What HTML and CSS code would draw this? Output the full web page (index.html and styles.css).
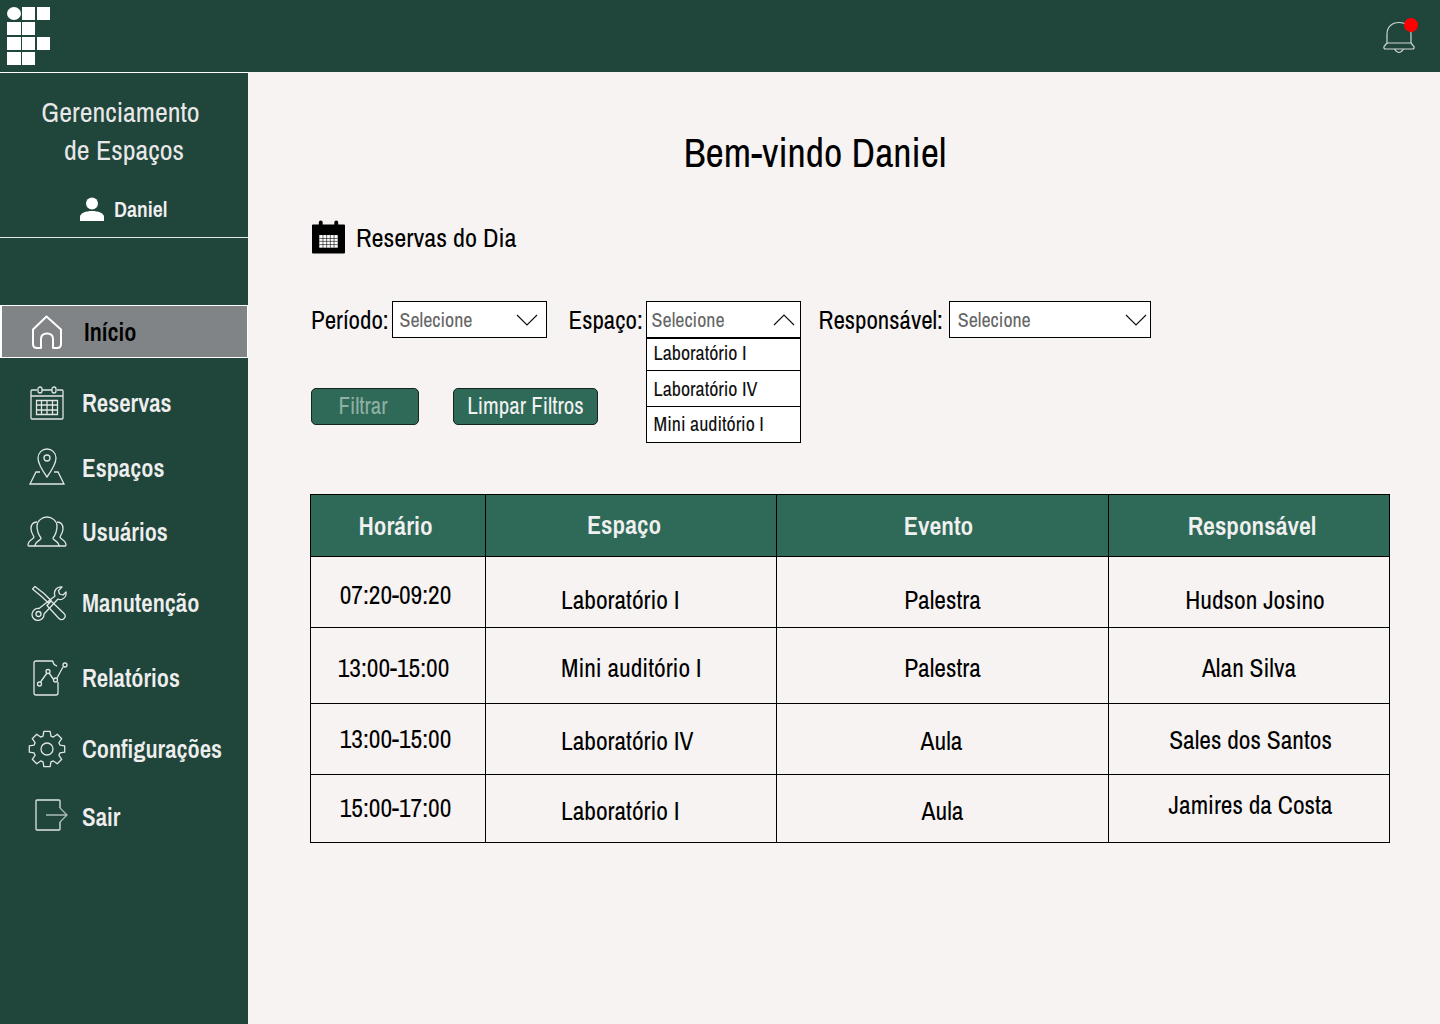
FILE: index.html
```html
<!DOCTYPE html>
<html lang="pt-BR">
<head>
  <meta charset="UTF-8">
  <title>Gerenciamento de Espaços</title>
  <link rel="stylesheet" href="styles.css">
</head>
<body>
  <header class="topbar">
    <!-- Logo -->
    <svg class="logo" width="44" height="59" viewBox="0 0 44 59" fill="#fff">
      <ellipse cx="7" cy="6.500" rx="7" ry="6.500"/>
      <rect x="15" width="13" height="13"/><rect x="30" width="13" height="13"/>
      <rect y="15" width="14" height="13"/><rect x="15" y="15" width="13" height="13"/>
      <rect y="30" width="14" height="13"/><rect x="15" y="30" width="13" height="13"/><rect x="30" y="30" width="13" height="13"/>
      <rect y="45" width="14" height="13"/><rect x="15" y="45" width="13" height="13"/>
    </svg>
    <div class="bell">
      <svg width="34" height="34" viewBox="0 0 34 34" fill="none" stroke="#cfd8d4" stroke-width="1.200">
        <path d="M5 23V14C5 7 10 2.500 17 2.500S29 7 29 14V23"/>
        <path d="M5 23L2 26.500Q1.500 29 3.500 29H30.500Q32.500 29 32 26.500L29 23H5"/>
        <path d="M12.500 29Q17 36 21.500 29"/>
      </svg>
      <span class="bell-dot"></span>
    </div>
  </header>

  <div class="layout">
    <aside class="sidebar">
      <div class="side-head">
        <h2 class="side-title">Gerenciamento<br><span class="side-title-2">de Espaços</span></h2>
        <div class="side-user">
          <svg width="24" height="24" viewBox="0 0 24 24" fill="#fff">
            <circle cx="12" cy="6.500" r="6"/>
            <path d="M0 24V20C0 16 6 14 12 14S24 16 24 20V24Z"/>
          </svg>
          <span>Daniel</span>
        </div>
      </div>

      <nav class="nav">
        <a class="nav-item active">
          <svg width="32" height="34" viewBox="0 0 32 34" fill="none" stroke="#fff" stroke-width="2" stroke-linejoin="round">
            <path d="M2 14.500L15.500 1.500L30 14.500V29Q30 33 26 33H22V24Q22 18.500 16 18.500T10 24V33H6Q2 33 2 29Z"/>
          </svg>
          <span>Início</span>
        </a>
        <a class="nav-item item-reservas">
          <svg width="34" height="34" viewBox="0 0 34 34" fill="none" stroke="#dfe5e2" stroke-width="1.300">
            <path d="M7 4H2Q1 4 1 5V32Q1 33 2 33H32Q33 33 33 32V5Q33 4 32 4H27M12 4H22M1 10H33"/>
            <rect x="8" y="1" width="4" height="6" rx="2"/><rect x="22" y="1" width="4" height="6" rx="2"/>
            <path d="M6.500 14.500H27.500V28.500H6.500ZM6.500 19H27.500M6.500 24H27.500M11.500 14.500V28.500M17 14.500V28.500M22.500 14.500V28.500"/>
          </svg>
          <span>Reservas</span>
        </a>
        <a class="nav-item item-espacos">
          <svg width="38" height="38" viewBox="0 0 38 38" fill="none" stroke="#dfe5e2" stroke-width="1.300">
            <path d="M19 30C14 23 10 17 10 11A9 9 0 0 1 28 11C28 17 24 23 19 30Z"/>
            <circle cx="19" cy="11" r="3"/>
            <path d="M12 25H8L2 37H36L30 25H26"/>
          </svg>
          <span>Espaços</span>
        </a>
        <a class="nav-item item-usuarios">
          <svg width="40" height="32" viewBox="0 0 40 32" fill="none" stroke="#dfe5e2" stroke-width="1.300">
            <path d="M14 22C11 18 10 15 10 10C10 5 15 1 20 1S30 5 30 10C30 15 29 18 26 22C25 24 32 25 32 30H8C8 25 15 24 14 22Z"/>
            <path d="M10 6C6 6 4 9 4 13C4 16 6 19 7 21C7 23 1 24 1 29Q1 30 2 30H8"/>
            <path d="M30 6C34 6 36 9 36 13C36 16 34 19 33 21C33 23 39 24 39 29Q39 30 38 30H32"/>
          </svg>
          <span>Usuários</span>
        </a>
        <a class="nav-item item-manutencao">
          <svg width="36" height="36" viewBox="0 0 36 36" fill="none" stroke="#dfe5e2" stroke-width="1.300" stroke-linejoin="round">
            <path d="M1.500 4L4 1.500L13 8.500L20 15.500L17.500 18L10 11Z"/>
            <path d="M20 16L33 28.500Q35.500 31 33 33.500T27.500 33L16 20.500Z"/>
            <path d="M24 11C22 6 26 1 31 2L27.500 5.500L28.500 9L32 10L35 7C36 12 31 16 27 14L13 29A6 6 0 1 1 8 23.500Z"/>
            <circle cx="7.500" cy="29" r="2.500"/>
          </svg>
          <span>Manutenção</span>
        </a>
        <a class="nav-item item-relatorios">
          <svg width="36" height="36" viewBox="0 0 36 36" fill="none" stroke="#dfe5e2" stroke-width="1.300">
            <path d="M20 1H3Q1 1 1 3V33Q1 35 3 35H23Q25 35 25 33V22"/>
            <path d="M20 1Q20 5 24 6"/>
            <path d="M7.500 22L14 13M16 13L21 20M24 18L30 7"/>
            <circle cx="6.500" cy="24" r="2"/><circle cx="15" cy="11.500" r="2"/><circle cx="22.500" cy="20" r="2"/><circle cx="32" cy="5" r="2"/>
          </svg>
          <span>Relatórios</span>
        </a>
        <a class="nav-item item-config">
          <svg width="38" height="38" viewBox="0 0 38 38" fill="none" stroke="#dfe5e2" stroke-width="1.300" stroke-linejoin="round">
            <g transform="translate(19 19)">
              <polygon points="-3.950,-12.900 -3.130,-17.700 3.130,-17.700 3.950,-12.900 6.330,-11.910 10.300,-14.730 14.730,-10.300 11.910,-6.330 12.900,-3.950 17.700,-3.130 17.700,3.130 12.900,3.950 11.910,6.330 14.730,10.300 10.300,14.730 6.330,11.910 3.950,12.900 3.130,17.700 -3.130,17.700 -3.950,12.900 -6.330,11.910 -10.300,14.730 -14.730,10.300 -11.910,6.330 -12.900,3.950 -17.700,3.130 -17.700,-3.130 -12.900,-3.950 -11.910,-6.330 -14.730,-10.300 -10.300,-14.730 -6.330,-11.910"/>
              <circle r="6"/>
            </g>
          </svg>
          <span>Configurações</span>
        </a>
        <a class="nav-item item-sair">
          <svg width="34" height="32" viewBox="0 0 34 32" fill="none" stroke="#dfe5e2" stroke-width="1.300">
            <path d="M25 9V2Q25 1 24 1H2Q1 1 1 2V30Q1 31 2 31H24Q25 31 25 30V23"/>
            <path d="M11 16H32M25 9L32 16L25 23" stroke="#a9bcb5"/>
          </svg>
          <span>Sair</span>
        </a>
      </nav>
    </aside>

    <main class="content">
      <h1 class="welcome">Bem-vindo Daniel</h1>

      <div class="section-head">
        <svg width="33" height="34" viewBox="0 0 34 34">
          <path d="M1 4H7V2Q7 0 9 0T11 2V4H23V2Q23 0 25 0T27 2V4H33Q34 4 34 5V33Q34 34 33 34H1Q0 34 0 33V5Q0 4 1 4Z" fill="#000"/>
          <path d="M7.500 15H26.500V28H7.500Z" fill="#fff"/>
          <path d="M7.500 18.500H26.500M7.500 21.500H26.500M7.500 24.800H26.500M11.300 15V28M15.100 15V28M18.900 15V28M22.700 15V28" stroke="#000" stroke-width="0.600"/>
        </svg>
        <h3>Reservas do Dia</h3>
      </div>

      <div class="filters">
        <label class="filter-label">Período:</label>
        <div class="select select-periodo">
          <span>Selecione</span>
          <svg width="22" height="12" viewBox="0 0 22 12" fill="none" stroke="#111" stroke-width="1.200"><path d="M1 1L11 11L21 1"/></svg>
        </div>
        <label class="filter-label label-espaco">Espaço:</label>
        <div class="select select-espaco">
          <span>Selecione</span>
          <svg width="22" height="12" viewBox="0 0 22 12" fill="none" stroke="#111" stroke-width="1.200"><path d="M1 11L11 1L21 11"/></svg>
          <ul class="menu">
            <li>Laboratório I</li>
            <li class="menu-mid">Laboratório IV</li>
            <li>Mini auditório I</li>
          </ul>
        </div>
        <label class="filter-label label-resp">Responsável:</label>
        <div class="select select-resp">
          <span>Selecione</span>
          <svg width="22" height="12" viewBox="0 0 22 12" fill="none" stroke="#111" stroke-width="1.200"><path d="M1 1L11 11L21 1"/></svg>
        </div>
      </div>

      <div class="actions">
        <button class="btn btn-filtrar" disabled>Filtrar</button>
        <button class="btn btn-limpar">Limpar Filtros</button>
      </div>

      <table class="agenda">
        <colgroup><col class="col-1"><col class="col-2"><col class="col-3"><col class="col-4"></colgroup>
        <thead>
          <tr>
            <th class="h-horario">Horário</th>
            <th class="h-espaco">Espaço</th>
            <th class="h-evento">Evento</th>
            <th class="h-resp">Responsável</th>
          </tr>
        </thead>
        <tbody>
          <tr class="row-1">
            <td class="time">07:20-09:20</td>
            <td class="place">Laboratório I</td>
            <td>Palestra</td>
            <td class="shift-r">Hudson Josino</td>
          </tr>
          <tr class="row-2">
            <td class="time shift-l">13:00-15:00</td>
            <td class="place">Mini auditório I</td>
            <td>Palestra</td>
            <td>Alan Silva</td>
          </tr>
          <tr class="row-3">
            <td class="time">13:00-15:00</td>
            <td class="place">Laboratório IV</td>
            <td class="aula">Aula</td>
            <td class="nudge">Sales dos Santos</td>
          </tr>
          <tr class="row-4">
            <td class="time">15:00-17:00</td>
            <td class="place">Laboratório I</td>
            <td>Aula</td>
            <td class="raise">Jamires da Costa</td>
          </tr>
        </tbody>
      </table>
    </main>
  </div>
</body>
</html>
```

FILE: styles.css
```css
/* Base */
* {
  box-sizing: border-box;
}
body {
  margin: 0;
  height: 1024px;
  overflow: hidden;
  font-family: "Archivo Narrow", "Roboto Condensed", "Liberation Sans", sans-serif;
  background: #f7f3f2;
  color: #000;
}

/* Top bar */
.topbar {
  height: 72px;
  background: #20453b;
  display: flex;
  justify-content: space-between;
  padding: 7px 24px 0 7px;
}
.bell {
  position: relative;
  width: 34px;
  height: 34px;
  margin-top: 13px;
}
.bell-dot {
  position: absolute;
  top: -2px;
  right: -2px;
  width: 14px;
  height: 14px;
  border-radius: 50%;
  background: #f00;
}

/* Layout */
.layout {
  display: flex;
  height: 952px;
}
.sidebar {
  width: 248px;
  flex: none;
  background: #20453b;
  border-top: 1px solid #fff;
}
.side-head {
  height: 165px;
  border-bottom: 1px solid #e4e8e6;
  text-align: center;
  padding-top: 20px;
}
.side-title {
  margin: 0;
  font-size: 28px;
  font-weight: 400;
  line-height: 38px;
  color: #e8e8e8;
  padding-right: 7px;
}
.side-title-2 {
  margin-left: 7px;
}
.side-user {
  display: flex;
  align-items: center;
  gap: 10px;
  margin: 25px 0 0 80px;
  color: #f0f0f0;
  font-size: 22px;
  font-weight: 600;
}

/* Sidebar nav */
.nav {
  padding-top: 67px;
}
.nav-item {
  display: flex;
  align-items: center;
  height: 40px;
  color: #eeeeee;
  font-size: 25px;
  font-weight: 600;
}
.nav-item svg {
  flex: none;
}
.nav-item.active {
  height: 53px;
  background: #808486;
  border: 1px solid #fff;
  border-left-width: 2px;
  padding-left: 29px;
  color: #000;
}
.nav-item.active span {
  margin-left: 21px;
}
.item-reservas { margin-top: 25px; padding-left: 30px; }
.item-reservas span { margin-left: 18px; }
.item-espacos { margin-top: 25px; padding-left: 28px; }
.item-espacos span { margin-left: 16px; }
.item-espacos svg { margin-bottom: 4px; }
.item-usuarios { margin-top: 24px; padding-left: 27px; }
.item-usuarios span { margin-left: 15px; }
.item-manutencao { margin-top: 31px; padding-left: 31px; }
.item-manutencao span { margin-left: 15px; }
.item-relatorios { margin-top: 35px; padding-left: 33px; }
.item-relatorios span { margin-left: 13px; }
.item-config { margin-top: 31px; padding-left: 28px; }
.item-config span { margin-left: 16px; }
.item-sair { margin-top: 28px; padding-left: 35px; }
.item-sair span { margin-left: 13px; }
.item-sair svg { margin-bottom: 4px; }

/* Main content */
.content {
  flex: 1;
  padding: 59px 50px 0 62px;
}
.welcome {
  margin: 0;
  height: 44px;
  line-height: 44px;
  font-size: 40px;
  font-weight: 400;
  text-align: center;
  padding-right: 70px;
}
.section-head {
  display: flex;
  align-items: center;
  gap: 11px;
  margin: 45px 0 0 2px;
  height: 34px;
}
.section-head h3 {
  margin: 0;
  font-size: 26.300px;
  font-weight: 400;
}

/* Filters */
.filters {
  display: flex;
  align-items: center;
  margin: 47px 0 0 1px;
  height: 37px;
}
.filter-label {
  font-size: 25px;
  margin-right: 3px;
}
.label-espaco { margin-left: 22px; margin-right: 3px; }
.label-resp { margin-left: 18px; margin-right: 6px; }
.select {
  display: flex;
  align-items: center;
  justify-content: space-between;
  height: 37px;
  background: #fff;
  border: 1px solid #000;
  padding: 0 8px 0 7px;
  font-size: 20px;
  color: #666;
  position: relative;
}
.select-periodo { width: 155px; }
.select-espaco { width: 155px; padding: 0 5px; }
.select-resp { width: 202px; padding: 0 3px 0 8px; }
.menu {
  position: absolute;
  top: 36px;
  left: -1px;
  width: 155px;
  height: 105px;
  margin: 0;
  padding: 0;
  list-style: none;
  background: #fff;
  border: 1px solid #000;
  color: #111;
  font-size: 20px;
}
.menu li {
  height: 31px;
  line-height: 28px;
  padding-left: 7px;
}
.menu .menu-mid {
  height: 37px;
  line-height: 36px;
  border-top: 1px solid #000;
  border-bottom: 1px solid #000;
}
.menu li:last-child {
  height: 35px;
  line-height: 34px;
}

/* Buttons */
.actions {
  display: flex;
  gap: 34px;
  margin: 50px 0 0 1px;
}
.btn {
  height: 37px;
  background: #2f6a58;
  border: 1px solid #15251f;
  border-radius: 5px;
  font-family: inherit;
  font-size: 23px;
  color: #f2f2f2;
  padding: 0 0 3px;
  white-space: nowrap;
}
.btn-filtrar {
  width: 108px;
  color: #8fb0a5;
  padding-right: 4px;
}
.btn-limpar {
  width: 145px;
}

/* Reservations table */
.agenda {
  width: 1079px;
  margin-top: 69px;
  table-layout: fixed;
  border-collapse: collapse;
  font-size: 25.500px;
}
.col-1 { width: 175px; }
.col-2 { width: 291px; }
.col-3 { width: 332px; }
.col-4 { width: 281px; }
.agenda th,
.agenda td {
  border: 1px solid #000;
  text-align: center;
  padding: 0;
}
.agenda th {
  height: 62px;
  background: #2f6a58;
  color: #f0f0f0;
  font-size: 26px;
  font-weight: 600;
}
.agenda .h-horario { padding-right: 5px; }
.agenda .h-espaco { padding-right: 14px; padding-bottom: 2px; }
.agenda .h-evento { padding-right: 8px; }
.agenda .h-resp { padding-left: 6px; }
.agenda .place {
  text-align: left;
  padding-left: 75px;
}
.agenda .time { padding-right: 5px; }
.agenda .shift-l { padding-right: 9px; }
.agenda .shift-r { padding-left: 12px; }

.row-1 td { height: 71px; padding-top: 16px; }
.agenda .row-1 .time { padding-top: 6px; }
.row-2 td { height: 76px; padding-top: 4px; }
.row-3 td { height: 71px; padding-top: 4px; }
.agenda .row-3 .time { padding-top: 0; }
.agenda .row-3 .aula { padding-right: 2px; }
.agenda .row-3 .nudge { padding-top: 2px; padding-left: 3px; }
.row-4 td { height: 68px; padding-top: 4px; }
.agenda .row-4 .time { padding-top: 0; padding-bottom: 2px; }
.agenda .row-4 .raise { padding-top: 0; padding-bottom: 8px; padding-left: 3px; }
```
